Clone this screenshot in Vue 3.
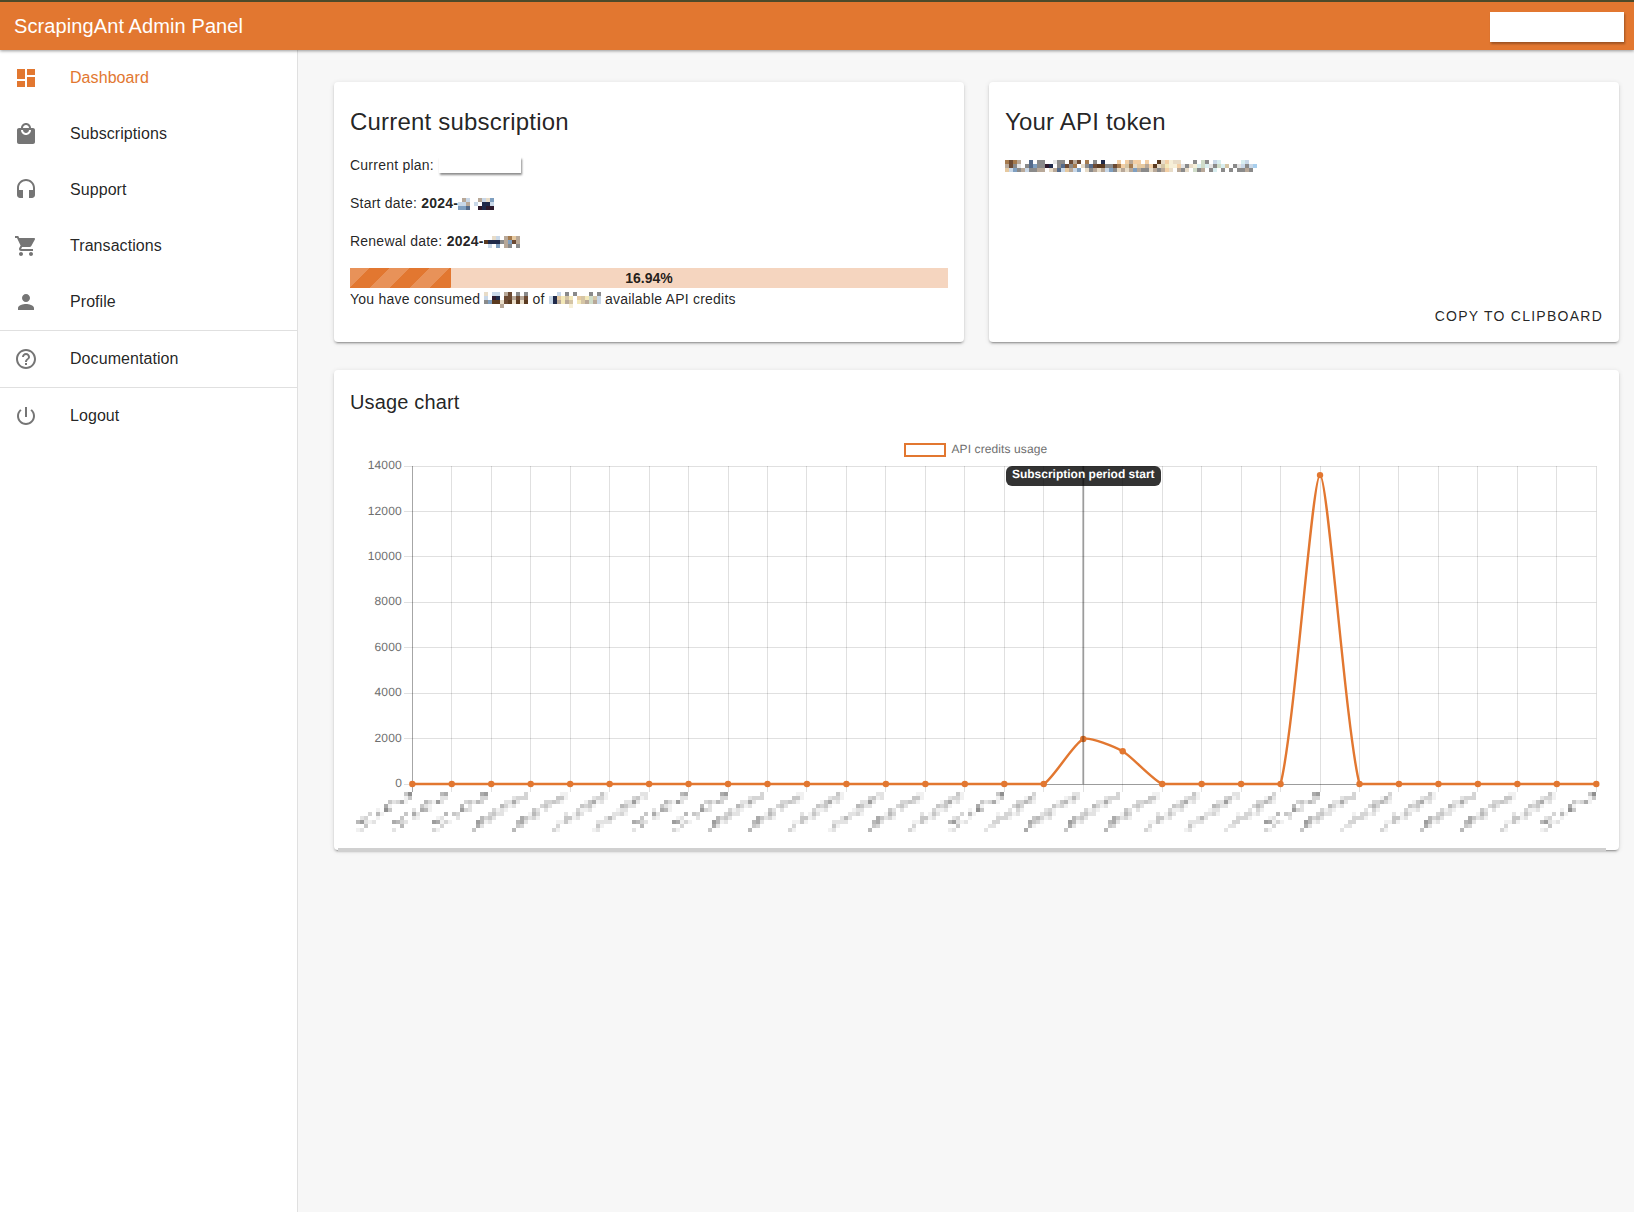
<script setup>
import { h } from "vue";

const ORANGE = "#e27730";

// 打码色块用的调色板
const palette = {
  a: "#c9d8e8", b: "#7f9fc0", c: "#b8a898", d: "#1f2a4a", e: "#2e1a2c",
  f: "#6c4a33", g: "#a57a4d", h: "#e8dcc8", i: "#f6efd8", j: "#8a8a8a",
  k: "#e6c9a0", m: "#546a8a", n: "#e4e4e4", o: "#cfdcc8", p: "#f3e8b8",
  q: "#5a3a20", r: "#d5c5a5", s: "#f3cfa5", t: "#d8eef0", u: "#a8cfee",
};

const Mosaic = (props) => {
  const rects = [];
  props.rows.forEach((row, y) => {
    [...row].forEach((c, x) => {
      if (palette[c]) {
        rects.push(h("rect", { x: x * 4, y: y * 4, width: 4, height: 4, fill: palette[c] }));
      }
    });
  });
  const w = Math.max(...props.rows.map((r) => r.length)) * 4;
  return h("svg", { class: "mosaic", width: w, height: props.rows.length * 4 }, rects);
};

const startDate = [".ca..cahb", "aac.a.dda", "bbm..edee"];
const renewDate = ["..ha.cgkc", "qdddjcbfc", ".a.b.cj.j"];
const consumed = ["h.aa.cf.j.j", "a.ed.ffcfcf", "jbqqhfqhqhq", "....c......"];
const available = ["..a.j.j...j.j", "adkprp.krpora", "adcpcr.prcoca", ".....i......."];
const token = [
  "gfgc..m.jj..njj.fcf.g.j.d...s.scss.s..qhsihh...j.oj.at.....ta..",
  "cfjn.jmbjjed.jmfjg.hjmfqqjjfgsrghkkcsqhrpiisnjhitotnjotr.jnajau",
  "kabjcajjcc.hcmakcab.hjchcabjhchcbcjjhcjcsh.cjh.ojc.jt.j.j.jjcj.",
];

const navTop = [
  { label: "Dashboard", active: true, d: "M3 13h8V3H3v10zm0 8h8v-6H3v6zm10 0h8V11h-8v10zm0-18v6h8V3h-8z" },
  { label: "Subscriptions", d: "M19 6h-2c0-2.76-2.24-5-5-5S7 3.24 7 6H5c-1.1 0-1.99.9-1.99 2L3 20c0 1.1.9 2 2 2h14c1.1 0 2-.9 2-2V8c0-1.1-.9-2-2-2zm-7-3c1.66 0 3 1.34 3 3H9c0-1.66 1.34-3 3-3zm0 10c-2.76 0-5-2.24-5-5h2c0 1.66 1.34 3 3 3s3-1.34 3-3h2c0 2.76-2.24 5-5 5z" },
  { label: "Support", d: "M12 1c-4.97 0-9 4.03-9 9v7c0 1.66 1.34 3 3 3h3v-8H5v-2c0-3.87 3.13-7 7-7s7 3.13 7 7v2h-4v8h3c1.66 0 3-1.34 3-3v-7c0-4.97-4.03-9-9-9z" },
  { label: "Transactions", d: "M7 18c-1.1 0-1.99.9-1.99 2S5.9 22 7 22s2-.9 2-2-.9-2-2-2zM1 2v2h2l3.6 7.59-1.35 2.45c-.16.28-.25.61-.25.96 0 1.1.9 2 2 2h12v-2H7.42c-.14 0-.25-.11-.25-.25l.03-.12.9-1.63h7.45c.75 0 1.41-.41 1.75-1.03l3.58-6.49c.08-.14.12-.31.12-.48 0-.55-.45-1-1-1H5.21l-.94-2H1zm16 16c-1.1 0-1.99.9-1.99 2s.89 2 1.99 2 2-.9 2-2-.9-2-2-2z" },
  { label: "Profile", d: "M12 12c2.21 0 4-1.79 4-4s-1.79-4-4-4-4 1.79-4 4 1.79 4 4 4zm0 2c-2.67 0-8 1.34-8 4v2h16v-2c0-2.66-5.33-4-8-4z" },
];
const docItem = { label: "Documentation", d: "M11 18h2v-2h-2v2zm1-16C6.48 2 2 6.48 2 12s4.48 10 10 10 10-4.48 10-10S17.52 2 12 2zm0 18c-4.41 0-8-3.59-8-8s3.59-8 8-8 8 3.59 8 8-3.59 8-8 8zm0-14c-2.21 0-4 1.79-4 4h2c0-1.1.9-2 2-2s2 .9 2 2c0 2-3 1.75-3 5h2c0-2.25 3-2.5 3-5 0-2.21-1.79-4-4-4z" };
const logoutItem = { label: "Logout", d: "M13 3h-2v10h2V3zm4.83 2.17l-1.42 1.42C17.99 7.86 19 9.81 19 12c0 3.87-3.13 7-7 7s-7-3.13-7-7c0-2.19 1.01-4.14 2.58-5.42L6.17 5.17C4.23 6.82 3 9.26 3 12c0 4.97 4.03 9 9 9s9-4.03 9-9c0-2.74-1.23-5.18-3.17-6.83z" };

// 图表坐标（svg 的 viewBox 与页面坐标一致）
const left = 412.3;
const right = 1596.3;
const top = 466;
const bottom = 784;
const step = (right - left) / 30;
const xAt = (i) => left + step * i;
const yAt = (v) => bottom - (v / 14000) * (bottom - top);
const crisp = (n) => Math.floor(n) + 0.5;

const values = Array(31).fill(0);
values[17] = 1980;
values[18] = 1440;
values[23] = 13600;

const points = values.map((v, i) => ({ x: xAt(i), y: yAt(v) }));
const yTicks = [0, 2000, 4000, 6000, 8000, 10000, 12000, 14000].map((v) => ({ v, y: yAt(v) }));
const xTicks = values.map((_, i) => xAt(i));

// 和 chart.js 一样的 bezier 平滑
function linePath() {
  const t = 0.2;
  const clampY = (y) => Math.min(bottom, Math.max(top, y));
  const ctrl = points.map((p, i) => {
    const p0 = points[i - 1] || p;
    const p2 = points[i + 1] || p;
    const d01 = Math.hypot(p.x - p0.x, p.y - p0.y);
    const d12 = Math.hypot(p2.x - p.x, p2.y - p.y);
    const sum = d01 + d12 || 1;
    const fa = (t * d01) / sum;
    const fb = (t * d12) / sum;
    return {
      px: p.x - fa * (p2.x - p0.x),
      py: clampY(p.y - fa * (p2.y - p0.y)),
      nx: p.x + fb * (p2.x - p0.x),
      ny: clampY(p.y + fb * (p2.y - p0.y)),
    };
  });
  let d = `M${points[0].x} ${points[0].y}`;
  for (let i = 1; i < points.length; i++) {
    d += `C${ctrl[i - 1].nx} ${ctrl[i - 1].ny} ${ctrl[i].px} ${ctrl[i].py} ${points[i].x} ${points[i].y}`;
  }
  return d;
}
const chartLine = linePath();

// x 轴的日期标签被打码了，这里画成灰色小方块
const labelShapes = [
  [
    "............57",
    "............23",
    "........43262.",
    ".......511....",
    ".....1.741....",
    "...4.52.......",
    ".13..11.......",
    "66221.........",
    "..4...........",
    "21............",
  ],
  [
    "............12",
    "..........1342",
    "........23521.",
    ".......4321...",
    ".....3211.....",
    "....2431......",
    "..54321.......",
    ".6521.........",
    ".52...........",
    "5.............",
  ],
  [
    "............31",
    "..........2421",
    "........23621.",
    ".......4431...",
    "......2121....",
    "...1.2321.....",
    "...3421.......",
    ".1231.........",
    ".31...........",
    "21............",
  ],
];
const shapeOrder = [0, 0, 0, 1, 1, 2, 2, 0, 0, 1, 1, 2, 2, 1, 2, 0, 2, 1, 1, 1, 2, 2, 2, 0, 1, 2, 2, 1, 1, 2, 0];
const labelCells = [];
xTicks.forEach((tx, n) => {
  const x0 = Math.floor((tx - 56) / 4) * 4;
  labelShapes[shapeOrder[n]].forEach((row, r) => {
    [...row].forEach((c, col) => {
      if (c === ".") return;
      const level = Number(c) + ((n * 7 + r * 3 + col * 5) % 3) - 1;
      const g = 255 - Math.max(0, level) * 14;
      labelCells.push({ x: x0 + col * 4, y: 792 + r * 4, fill: `rgb(${g},${g},${g})` });
    });
  });
});
</script>

<template>
  <div class="app">
    <header class="topbar">
      <div class="brand">ScrapingAnt Admin Panel</div>
      <div class="user-btn"></div>
    </header>

    <div class="body">
      <aside class="drawer">
        <a v-for="item in navTop" :key="item.label" class="nav-item" :class="{ active: item.active }">
          <svg class="nav-icon" viewBox="0 0 24 24"><path :d="item.d" /></svg>
          <span>{{ item.label }}</span>
        </a>
        <div class="divider"></div>
        <a class="nav-item">
          <svg class="nav-icon" viewBox="0 0 24 24"><path :d="docItem.d" /></svg>
          <span>{{ docItem.label }}</span>
        </a>
        <div class="divider"></div>
        <a class="nav-item">
          <svg class="nav-icon" viewBox="0 0 24 24"><path :d="logoutItem.d" /></svg>
          <span>{{ logoutItem.label }}</span>
        </a>
      </aside>

      <main class="main">
        <div class="top-cards">
          <section class="card sub-card">
            <h2 class="card-title">Current subscription</h2>
            <p class="row">Current plan: <span class="plan-chip"></span></p>
            <p class="row">Start date: <b>2024-</b><Mosaic :rows="startDate" /></p>
            <p class="row">Renewal date: <b>2024-</b><Mosaic :rows="renewDate" /></p>
            <div class="progress">
              <div class="progress-fill"></div>
              <span class="progress-label">16.94%</span>
            </div>
            <p class="usage">
              You have consumed <Mosaic :rows="consumed" /> of <Mosaic :rows="available" /> available API credits
            </p>
          </section>

          <section class="card token-card">
            <h2 class="card-title">Your API token</h2>
            <div class="token"><Mosaic :rows="token" /></div>
            <div class="actions">
              <button class="copy-btn">Copy to clipboard</button>
            </div>
          </section>
        </div>

        <section class="card chart-card">
          <h3 class="chart-title">Usage chart</h3>
          <svg class="chart" width="1268" height="430" viewBox="350 418 1268 430">
            <rect x="905" y="444" width="40" height="12" fill="#fff" :stroke="ORANGE" stroke-width="2" />
            <text x="951.5" y="452.5" class="tick legend-text">API credits usage</text>

            <line
              v-for="t in yTicks"
              :key="t.v"
              x1="404"
              :x2="right"
              :y1="crisp(t.y)"
              :y2="crisp(t.y)"
              stroke="rgba(0,0,0,0.12)"
            />
            <line
              v-for="(x, i) in xTicks"
              :key="i"
              :x1="crisp(x)"
              :x2="crisp(x)"
              :y1="top"
              y2="792"
              :stroke="i === 0 ? 'rgba(0,0,0,0.35)' : 'rgba(0,0,0,0.12)'"
            />
            <line :x1="left" :x2="right" :y1="crisp(bottom)" :y2="crisp(bottom)" stroke="rgba(0,0,0,0.3)" />
            <text v-for="t in yTicks" :key="'l' + t.v" x="402" :y="t.y + 3.2" text-anchor="end" class="tick">{{ t.v }}</text>

            <rect v-for="(c, i) in labelCells" :key="'c' + i" :x="c.x" :y="c.y" width="4" height="4" :fill="c.fill" />

            <path :d="chartLine" fill="none" :stroke="ORANGE" stroke-width="2.4" />
            <circle v-for="(p, i) in points" :key="'p' + i" :cx="p.x" :cy="p.y" r="3.2" :fill="ORANGE" />

            <line :x1="xAt(17)" :x2="xAt(17)" :y1="top" :y2="bottom" stroke="rgba(0,0,0,0.3)" stroke-width="2" />
            <rect x="1006" y="466" width="155" height="20" rx="6" fill="rgba(0,0,0,0.8)" />
            <text :x="xAt(17)" y="478" text-anchor="middle" class="anno">Subscription period start</text>
          </svg>
          <div class="scroll-band"></div>
        </section>
      </main>
    </div>
  </div>
</template>

<style>
html,
body {
  margin: 0;
  background: #f7f7f7;
}
</style>

<style scoped>
.app {
  min-height: 100vh;
  display: flex;
  flex-direction: column;
  font-family: "Liberation Sans", Arial, sans-serif;
  color: rgba(0, 0, 0, 0.87);
}

.topbar {
  position: relative;
  z-index: 2;
  box-sizing: border-box;
  height: 50px;
  display: flex;
  align-items: center;
  justify-content: space-between;
  padding: 0 10px 0 14px;
  background: #e27730;
  border-top: 2px solid #4c4a2a;
  box-shadow: 0 1px 3px rgba(0, 0, 0, 0.4);
  color: #fff;
}

.brand {
  font-size: 20px;
  letter-spacing: 0.1px;
}

.user-btn {
  width: 134px;
  height: 30px;
  margin-top: 2px;
  background: #fff;
  box-shadow: 1px 2px 2px rgba(0, 0, 0, 0.3);
}

.body {
  flex: 1;
  display: flex;
}

.drawer {
  box-sizing: border-box;
  width: 298px;
  flex-shrink: 0;
  background: #fff;
  border-right: 1px solid #e0e0e0;
}

.nav-item {
  height: 56px;
  display: flex;
  align-items: center;
  padding-left: 14px;
  font-size: 16px;
  letter-spacing: 0.07px;
}

.nav-item.active {
  color: #e27730;
}

.nav-icon {
  width: 24px;
  height: 24px;
  margin-right: 32px;
  fill: #757575;
}

.nav-item.active .nav-icon {
  fill: #e27730;
}

.divider {
  height: 1px;
  background: #e0e0e0;
}

.main {
  flex: 1;
  min-width: 0;
  padding: 32px 15px 0 36px;
}

.top-cards {
  display: grid;
  grid-template-columns: 630px 1fr;
  gap: 25px;
}

.card {
  position: relative;
  background: #fff;
  border-radius: 4px;
  box-shadow: 0 3px 1px -2px rgba(0, 0, 0, 0.2), 0 2px 2px 0 rgba(0, 0, 0, 0.14), 0 1px 5px 0 rgba(0, 0, 0, 0.12);
}

.sub-card,
.token-card {
  box-sizing: border-box;
  height: 260px;
  padding: 24px 16px 0;
  display: flex;
  flex-direction: column;
}

.card-title {
  margin: 0;
  font-size: 24px;
  font-weight: 400;
  line-height: 32px;
  letter-spacing: 0.2px;
}

.row {
  margin: 18px 0 0;
  height: 20px;
  line-height: 20px;
  font-size: 14px;
  letter-spacing: 0.23px;
}

.card-title + .row {
  margin-top: 17px;
}

.mosaic {
  vertical-align: middle;
  display: inline-block;
}

.plan-chip {
  display: inline-block;
  width: 82px;
  height: 16px;
  margin: -2px 0 0 1px;
  vertical-align: middle;
  background: #fff;
  box-shadow: 1px 2px 2px rgba(0, 0, 0, 0.45);
}

.progress {
  position: relative;
  height: 20px;
  margin-top: 17px;
  background: #f5d5bf;
}

.progress-fill {
  width: 16.94%;
  height: 100%;
  background-color: #e27730;
  background-image: linear-gradient(
    135deg,
    rgba(255, 255, 255, 0.2) 25%,
    transparent 25%,
    transparent 50%,
    rgba(255, 255, 255, 0.2) 50%,
    rgba(255, 255, 255, 0.2) 75%,
    transparent 75%,
    transparent
  );
  background-size: 40px 40px;
}

.progress-label {
  position: absolute;
  inset: 0;
  text-align: center;
  line-height: 20px;
  font-size: 14px;
  font-weight: 700;
}

.usage {
  margin: 1px 0 0;
  line-height: 20px;
  font-size: 14px;
  letter-spacing: 0.23px;
}

.token {
  margin-top: 22px;
  line-height: 0;
}

.actions {
  margin-top: auto;
  margin-right: -8px;
  padding-bottom: 8px;
  display: flex;
  justify-content: flex-end;
}

.copy-btn {
  height: 36px;
  padding: 0 8px;
  border: 0;
  background: none;
  font-family: inherit;
  font-size: 14px;
  letter-spacing: 1.25px;
  text-transform: uppercase;
  color: rgba(0, 0, 0, 0.87);
}

.chart-card {
  margin-top: 28px;
  padding: 16px 0 2px 16px;
}

.chart-title {
  margin: 0;
  font-size: 20px;
  font-weight: 400;
  line-height: 32px;
  letter-spacing: 0.15px;
}

.chart {
  display: block;
}

.tick {
  font-size: 12px;
  fill: #6e6e6e;
  letter-spacing: 0.2px;
  text-rendering: geometricPrecision;
}

.legend-text {
  letter-spacing: 0.1px;
}

.anno {
  font-size: 12px;
  font-weight: 700;
  fill: #fff;
  text-rendering: geometricPrecision;
}

.scroll-band {
  position: absolute;
  left: 4px;
  right: 13px;
  bottom: -2px;
  height: 4px;
  background: #d0d0d0;
}
</style>
